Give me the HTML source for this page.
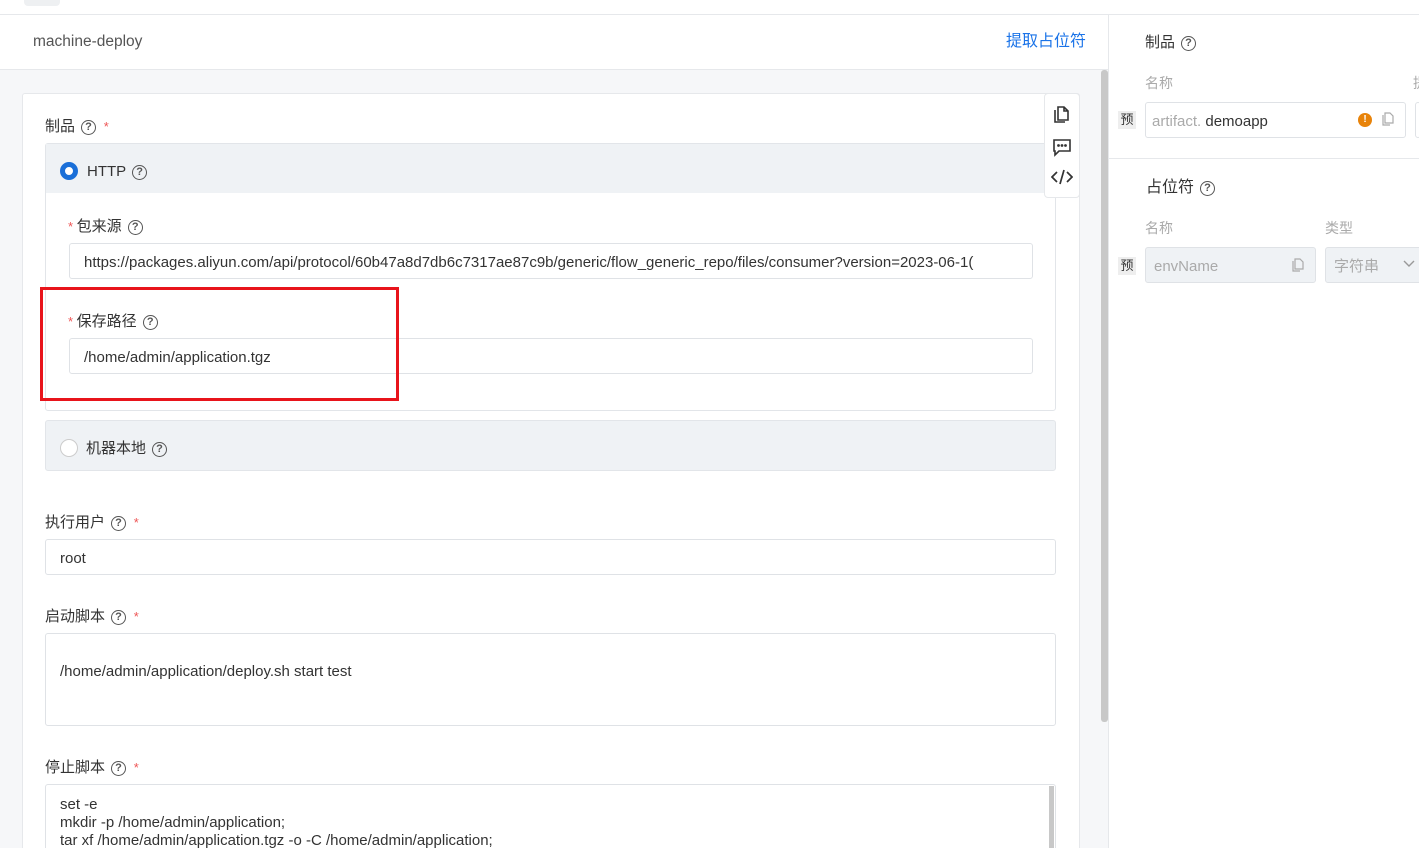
<!DOCTYPE html>
<html><head><meta charset="utf-8"><style>
*{box-sizing:border-box;margin:0;padding:0}
html,body{width:1419px;height:848px;overflow:hidden}
body{background:#fff;font-family:"Liberation Sans","Noto Sans CJK SC",sans-serif;color:#333;font-size:15px;position:relative}
.a{position:absolute}
.q{display:inline-block;width:15px;height:15px;border:1.3px solid #555;border-radius:50%;font-size:11px;line-height:13px;text-align:center;font-weight:bold;color:#555;vertical-align:1px;margin-left:6px}
.star{color:#e55;font-size:13px}
.inp{position:absolute;background:#fff;border:1px solid #dfe2e6;border-radius:3px;padding-left:14px;font-size:15px;color:#333;white-space:nowrap;overflow:hidden}
.lbl{position:absolute;font-size:15px;color:#333;line-height:18px;margin-top:2px}
</style></head><body>
<div class="a" style="left:24px;top:0;width:36px;height:6px;background:#eef0f2;border-radius:0 0 4px 4px"></div>
<div class="a" style="left:0;top:14px;width:1419px;height:1px;background:#e6e8eb"></div>
<div class="a" style="left:0;top:69px;width:1108px;height:779px;background:#f6f7f9;border-top:1px solid #e6e8eb"></div>
<div class="a" style="left:33px;top:33px;font-size:15.5px;color:#555;line-height:18px">machine-deploy</div>
<div class="a" style="left:1006px;top:32px;font-size:16px;color:#1a73e8;line-height:20px">提取占位符</div>
<div class="a" style="left:1108px;top:15px;width:1px;height:833px;background:#e6e8eb"></div>
<div class="a" style="left:1101px;top:70px;width:7px;height:652px;background:#c8c8c8;border-radius:3px"></div>
<div class="a" style="left:22px;top:93px;width:1058px;height:760px;background:#fff;border:1px solid #e6e8eb;border-radius:3px"></div>
<div class="lbl" style="left:45px;top:116px">制品<span class="q">?</span> <span class="star">&nbsp;*</span></div>
<div class="a" style="left:45px;top:143px;width:1011px;height:268px;border:1px solid #e2e5e9;border-radius:3px;background:#fff"></div>
<div class="a" style="left:46px;top:144px;width:1009px;height:49px;background:#eff2f5"></div>
<div class="a" style="left:60px;top:162px;width:18px;height:18px;border-radius:50%;border:5px solid #1a6fd8;background:#fff"></div>
<div class="lbl" style="left:87px;top:161px">HTTP<span class="q">?</span></div>
<div class="lbl" style="left:68px;top:216px"><span class="star">* </span>包来源<span class="q">?</span></div>
<div class="inp" style="left:69px;top:243px;width:964px;height:36px;line-height:38px">https://packages.aliyun.com/api/protocol/60b47a8d7db6c7317ae87c9b/generic/flow_generic_repo/files/consumer?version=2023-06-1(</div>
<div class="lbl" style="left:68px;top:311px"><span class="star">* </span>保存路径<span class="q">?</span></div>
<div class="inp" style="left:69px;top:338px;width:964px;height:36px;line-height:38px">/home/admin/application.tgz</div>
<div class="a" style="left:40px;top:287px;width:359px;height:114px;border:3px solid #e8141b"></div>
<div class="a" style="left:45px;top:420px;width:1011px;height:51px;background:#eff2f5;border:1px solid #e2e5e9;border-radius:3px"></div>
<div class="a" style="left:60px;top:439px;width:18px;height:18px;border-radius:50%;border:1px solid #ccc;background:#fff"></div>
<div class="lbl" style="left:86px;top:438px">机器本地<span class="q">?</span></div>
<div class="lbl" style="left:45px;top:512px">执行用户<span class="q">?</span> <span class="star">&nbsp;*</span></div>
<div class="inp" style="left:45px;top:539px;width:1011px;height:36px;line-height:38px">root</div>
<div class="lbl" style="left:45px;top:606px">启动脚本<span class="q">?</span> <span class="star">&nbsp;*</span></div>
<div class="inp" style="left:45px;top:633px;width:1011px;height:93px;padding-top:28px;line-height:20px">/home/admin/application/deploy.sh start test</div>
<div class="lbl" style="left:45px;top:757px">停止脚本<span class="q">?</span> <span class="star">&nbsp;*</span></div>
<div class="inp" style="left:45px;top:784px;width:1011px;height:80px;padding-top:11px;line-height:18px">set -e<br>mkdir -p /home/admin/application;<br>tar xf /home/admin/application.tgz -o -C /home/admin/application;</div>
<div class="a" style="left:1049px;top:786px;width:5px;height:62px;background:#c8c8c8"></div>
<div class="a" style="left:1044px;top:93px;width:36px;height:105px;background:#fff;border:1px solid #e6e8eb;border-radius:4px"></div>
<svg class="a" style="left:1052px;top:104px" width="20" height="20" viewBox="0 0 20 20" fill="none" stroke="#333" stroke-width="1.6"><path d="M6 3h6l4 4v9H6z M12 3v4h4 M3 6v12h10"/></svg>
<svg class="a" style="left:1052px;top:137px" width="20" height="20" viewBox="0 0 20 20" fill="none" stroke="#333" stroke-width="1.6"><path d="M2 3h16v11H7l-4 4V14H2z"/><circle cx="6.5" cy="8.5" r=".6" fill="#333"/><circle cx="10" cy="8.5" r=".6" fill="#333"/><circle cx="13.5" cy="8.5" r=".6" fill="#333"/></svg>
<svg class="a" style="left:1051px;top:168px" width="22" height="18" viewBox="0 0 22 18" fill="none" stroke="#333" stroke-width="1.7"><path d="M6 4L1 9l5 5M16 4l5 5-5 5M13 2L9 16"/></svg>
<div class="lbl" style="left:1145px;top:32px">制品<span class="q">?</span></div>
<div class="a" style="left:1145px;top:73px;font-size:14px;color:#aaa">名称</div>
<div class="a" style="left:1413px;top:73px;font-size:14px;color:#aaa">提</div>
<div class="a" style="left:1118px;top:111px;width:18px;height:18px;background:#eee;font-size:13px;text-align:center;line-height:18px">预</div>
<div class="inp" style="left:1145px;top:102px;width:261px;height:36px;line-height:38px;padding-left:6px"><span style="color:#aaa">artifact.</span> demoapp</div>
<div class="a" style="left:1358px;top:113px;width:14px;height:14px;border-radius:50%;background:#e8830a;color:#fff;font-size:10px;font-weight:bold;text-align:center;line-height:14px">!</div>
<svg class="a" style="left:1381px;top:112px" width="13" height="14" viewBox="0 0 13 14" fill="none" stroke="#aaa" stroke-width="1.2"><path d="M4 1h5l3 3v7H4z M2 3v10h7"/></svg>
<div class="a" style="left:1415px;top:102px;width:6px;height:36px;border:1px solid #dfe2e6;border-radius:3px"></div>
<div class="a" style="left:1109px;top:158px;width:310px;height:1px;background:#e6e8eb"></div>
<div class="lbl" style="left:1146px;top:177px;font-size:16px">占位符<span class="q">?</span></div>
<div class="a" style="left:1145px;top:218px;font-size:14px;color:#aaa">名称</div>
<div class="a" style="left:1325px;top:218px;font-size:14px;color:#aaa">类型</div>
<div class="a" style="left:1118px;top:257px;width:18px;height:18px;background:#eee;font-size:13px;text-align:center;line-height:18px">预</div>
<div class="inp" style="left:1145px;top:247px;width:171px;height:36px;line-height:38px;padding-left:8px;background:#eff2f5;color:#aaa">envName</div>
<svg class="a" style="left:1291px;top:258px" width="13" height="14" viewBox="0 0 13 14" fill="none" stroke="#aaa" stroke-width="1.2"><path d="M4 1h5l3 3v7H4z M2 3v10h7"/></svg>
<div class="inp" style="left:1325px;top:247px;width:100px;height:36px;line-height:38px;padding-left:8px;background:#eff2f5;color:#aaa">字符串</div>
<svg class="a" style="left:1403px;top:259px" width="12" height="10" viewBox="0 0 12 10" fill="none" stroke="#999" stroke-width="1.4"><path d="M1 2l5 5 5-5"/></svg>
</body></html>
